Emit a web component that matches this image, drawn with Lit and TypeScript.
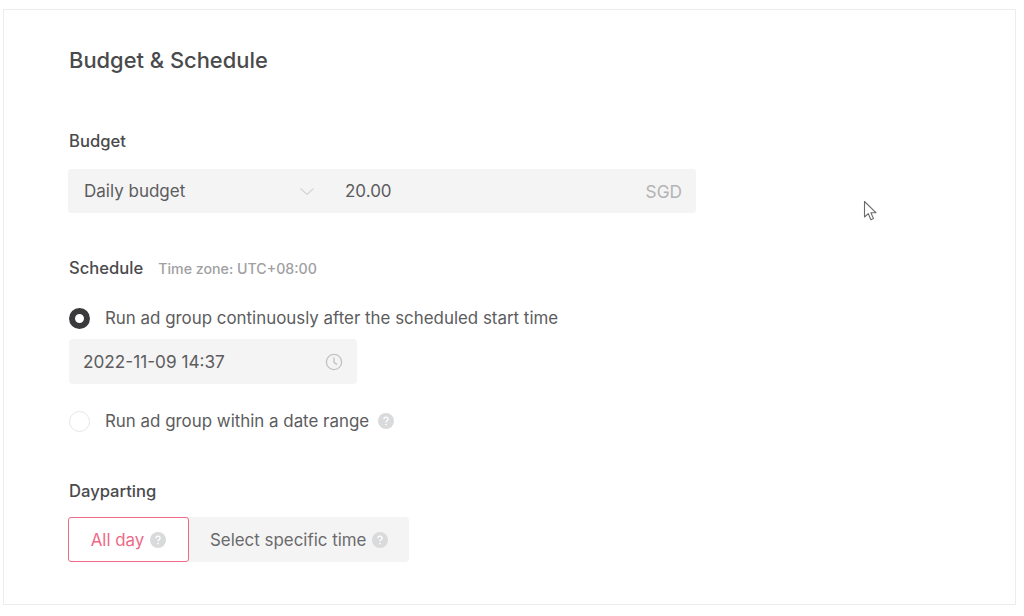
import { LitElement, html, css } from "lit";
import { customElement } from "lit/decorators.js";

const help = html`<svg class="help" viewBox="0 0 16 16" aria-hidden="true"><circle cx="8" cy="8" r="8" fill="#d8dadb"></circle><path d="M5.9 6.3C5.9 5 6.8 4.2 8 4.2s2.1.8 2.1 1.9c0 1.7-2.1 1.7-2.1 3.3" fill="none" stroke="#fff" stroke-width="1.3"></path><circle cx="8" cy="11.6" r=".85" fill="#fff"></circle></svg>`;

@customElement("app-root")
export class AppRoot extends LitElement {
  static styles = css`
    :host { display: block; width: 1024px; height: 616px; background: #fff; position: relative; overflow: hidden;
      font-family: "Inter", "Liberation Sans", sans-serif; color: #5c5c5e; box-sizing: border-box; padding: 9px 8px 11px 3px; }
    .card { box-sizing: border-box; height: 596px; border: 1px solid #ececec; padding: 0 0 0 65px; display: flex; flex-direction: column; align-items: flex-start; background: #fff; }
    h1 { margin: 36px 0 0; font-size: 21.9px; line-height: 28px; font-weight: 500; color: #4a4a4c; }
    .label { font-size: 16.6px; line-height: 20px; font-weight: 500; color: #4a4a4c; }
    .budget-label { margin-top: 57px; }
    .row { display: flex; margin-top: 18px; margin-left: -1px; width: 628px; height: 44px; background: #f4f4f4; border-radius: 3px; align-items: center; font-size: 17px; }
    .sel { width: 277px; box-sizing: border-box; padding: 0 20px 0 16px; display: flex; justify-content: space-between; align-items: center; }
    .sel svg { width: 16px; height: 9px; margin-right: 10px; }
    .val { flex: 1; }
    .cur { color: #b3b3b5; padding-right: 14px; font-size: 17.3px; font-weight: 400; }
    .sched { display: flex; align-items: baseline; gap: 15px; margin-top: 45px; }
    .tz { font-size: 14.2px; color: #a0a0a2; font-weight: 500; }
    .radio { display: flex; align-items: center; font-size: 16.9px; line-height: 22px; gap: 15px; }
    .r1 { margin-top: 29px; }
    .r2 { margin-top: 26px; }
    .dot { width: 21px; height: 21px; border-radius: 50%; box-sizing: border-box; flex: none; }
    .dot.on { border: 6px solid #3a3a3c; background: #fff; }
    .dot.off { border: 1px solid #e6e6e6; background: #fff; }
    .date { margin-top: 10px; width: 288px; height: 45px; box-sizing: border-box; background: #f4f4f4; border-radius: 4px; padding: 0 14px; display: flex; justify-content: space-between; align-items: center; font-size: 17.2px; }
    .date svg { width: 18px; height: 18px; }
    .help { width: 16px; height: 16px; flex: none; margin-left: 6px; }
    .r2 .help { margin-left: -6px; }
    .dp { margin-top: 49px; }
    .seg { display: flex; margin-top: 16px; margin-left: -1px; height: 45px; background: #f4f4f4; border-radius: 4px; width: 341px; font-size: 16.9px; }
    .seg > div { display: flex; align-items: center; box-sizing: border-box; }
    .seg .a { width: 121px; height: 45px; border: 1px solid #ee6a87; border-radius: 3px; background: #fff; color: #ee6a87; justify-content: center; }
    .seg .b { flex: 1; padding-left: 21px; color: #6a6a6c; }
    .cursor { position: absolute; left: 863px; top: 200px; width: 16px; height: 22px; }
  `;

  render() {
    return html`
      <div class="card">
        <h1>Budget &amp; Schedule</h1>
        <div class="label budget-label">Budget</div>
        <div class="row">
          <div class="sel"><span>Daily budget</span>
            <svg viewBox="0 0 16 9"><path d="M1.5 1.5 8 7.5l6.5-6" fill="none" stroke="#d4d4d6" stroke-width="1.2"></path></svg>
          </div>
          <div class="val">20.00</div>
          <div class="cur">SGD</div>
        </div>
        <div class="sched"><span class="label">Schedule</span><span class="tz">Time zone: UTC+08:00</span></div>
        <div class="radio r1"><span class="dot on"></span><span>Run ad group continuously after the scheduled start time</span></div>
        <div class="date"><span>2022-11-09 14:37</span>
          <svg viewBox="0 0 18 18"><circle cx="9" cy="9" r="7.6" fill="none" stroke="#c4c4c6" stroke-width="1.4"></circle><path d="M9 4.6V9.4l3 2.2" fill="none" stroke="#c4c4c6" stroke-width="1.4"></path></svg>
        </div>
        <div class="radio r2"><span class="dot off"></span><span>Run ad group within a date range</span>${help}</div>
        <div class="label dp">Dayparting</div>
        <div class="seg">
          <div class="a">All day${help}</div>
          <div class="b">Select specific time${help}</div>
        </div>
      </div>
      <svg class="cursor" viewBox="0 0 16 22"><path d="M1.5 1.5V17l3.8-3.3 2.6 6 2.6-1.1-2.6-5.9h5z" fill="#fff" stroke="#6a6a6c" stroke-width="1.1" stroke-linejoin="round"></path></svg>
    `;
  }
}
